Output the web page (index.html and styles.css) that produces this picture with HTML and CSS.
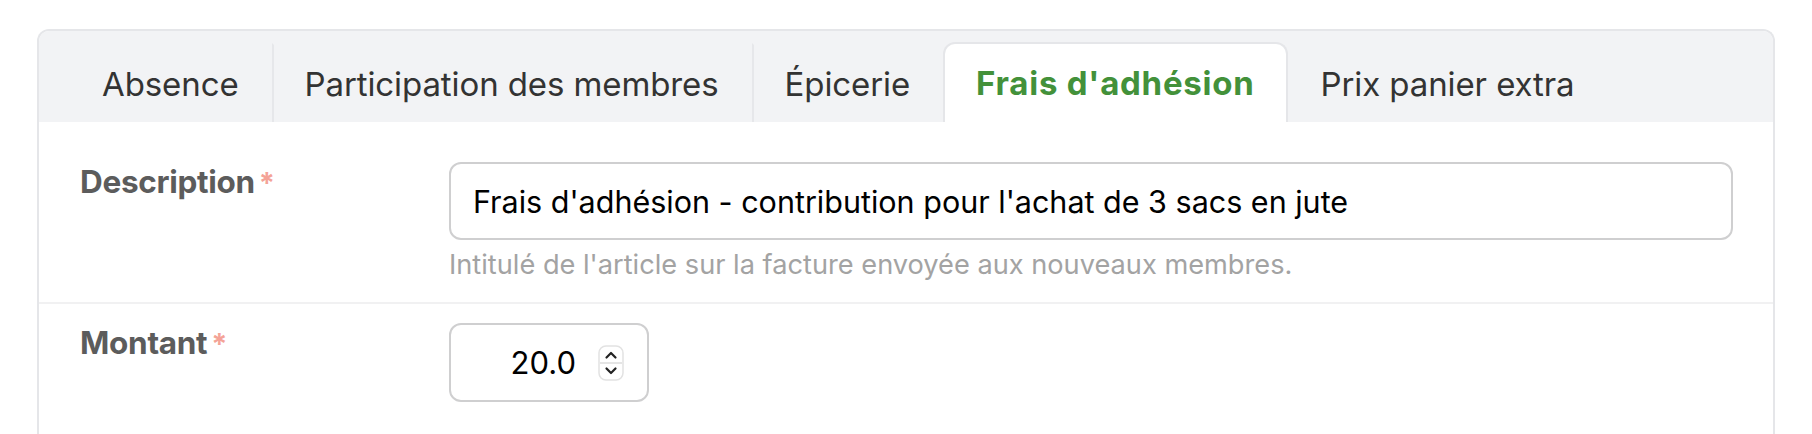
FILE: index.html
```html
<!DOCTYPE html>
<html lang="fr">
<head>
<meta charset="utf-8">
<title>Frais d'adhésion</title>
<link rel="stylesheet" href="styles.css">
</head>
<body>
<div class="card">
  <div class="tabs">
    <div class="tab">Absence</div>
    <div class="tab">Participation des membres</div>
    <div class="tab">Épicerie</div>
    <div class="tab active">Frais d'adhésion</div>
    <div class="tab after-active">Prix panier extra</div>
  </div>
  <div class="panel">
    <div class="row">
      <label class="label">Description<span class="req">*</span></label>
      <div class="field">
        <input class="input" type="text" value="Frais d'adhésion - contribution pour l'achat de 3 sacs en jute">
        <div class="help">Intitulé de l'article sur la facture envoyée aux nouveaux membres.</div>
      </div>
    </div>
    <div class="row last">
      <label class="label">Montant<span class="req">*</span></label>
      <div class="field">
        <div class="number">
          <span class="num-value">20.0</span>
          <svg class="spinner" width="26" height="36" viewBox="0 0 26 36">
            <rect x="1" y="1" width="24" height="34" rx="7" fill="#fff" stroke="#e2e2e2" stroke-width="1.5"/>
            <line x1="2" y1="18" x2="24" y2="18" stroke="#dcdcdc" stroke-width="1.5"/>
            <path d="M8.5 12.5 L13 8 L17.5 12.5" fill="none" stroke="#222" stroke-width="2.2" stroke-linecap="round" stroke-linejoin="round"/>
            <path d="M8.5 23.5 L13 28 L17.5 23.5" fill="none" stroke="#222" stroke-width="2.2" stroke-linecap="round" stroke-linejoin="round"/>
          </svg>
        </div>
      </div>
    </div>
  </div>
</div>
</body>
</html>
```

FILE: styles.css
```css
html, body {
  margin: 0;
  padding: 0;
  background: #ffffff;
}

body {
  font-family: Inter, "Noto Sans", "Liberation Sans", sans-serif;
  padding: 29px 37px 0 37px;
}

.card {
  border: 2px solid #e5e6e9;
  border-bottom: none;
  border-radius: 12px 12px 0 0;
  overflow: hidden;
  background: #fff;
  height: 420px;
}

.tabs {
  display: flex;
  align-items: flex-end;
  background: #f2f3f5;
  padding: 12px 0 0 30px;
  height: 91px;
  box-sizing: border-box;
}

.tab {
  height: 79px;
  display: flex;
  align-items: center;
  padding: 0 31px;
  font-size: 33px;
  color: #333;
  letter-spacing: -0.1px;
  border-left: 2px solid #e6e7ea;
  border-top: 2px solid transparent;
  border-right: 2px solid transparent;
  box-sizing: border-box;
}

.tab:first-child {
  border-left-color: transparent;
}

.tab.active {
  background: #fff;
  color: #43913a;
  font-weight: 700;
  letter-spacing: 0.75px;
  border: 2px solid #e5e6e9;
  border-bottom: none;
  border-radius: 12px 12px 0 0;
  height: 80px;
}

.tab.after-active {
  border-left-color: transparent;
}

.panel {
  padding-top: 20px;
}

.row {
  display: flex;
  padding: 20px 40px 20px 41px;
  border-bottom: 2px solid #f1f1f2;
}

.row.last {
  border-bottom: none;
  padding-top: 19px;
}

.label {
  width: 369px;
  flex: none;
  font-size: 31.5px;
  font-weight: 700;
  color: #5c5c5c;
  line-height: 40px;
  letter-spacing: -0.3px;
}

.req {
  color: #f4a397;
  margin-left: 4px;
  font-size: 29px;
}

.field {
  flex: 1;
  display: flex;
  flex-direction: column;
}

.input {
  height: 78px;
  box-sizing: border-box;
  border: 2px solid #cfcfd0;
  border-radius: 12px;
  padding: 0 22px;
  font-family: Inter, "Noto Sans", "Liberation Sans", sans-serif;
  font-size: 30.5px;
  color: #000;
  background: #fff;
  outline: none;
  width: 100%;
}

.help {
  margin-top: 8px;
  font-size: 27.2px;
  line-height: 34px;
  color: #a3a3a3;
}

.number {
  width: 200px;
  height: 79px;
  box-sizing: border-box;
  border: 2px solid #cfcfd0;
  border-radius: 12px;
  display: flex;
  align-items: center;
  justify-content: flex-end;
  gap: 22px;
  padding-right: 23px;
  font-size: 31px;
  color: #000;
}

.spinner {
  display: block;
}
```
